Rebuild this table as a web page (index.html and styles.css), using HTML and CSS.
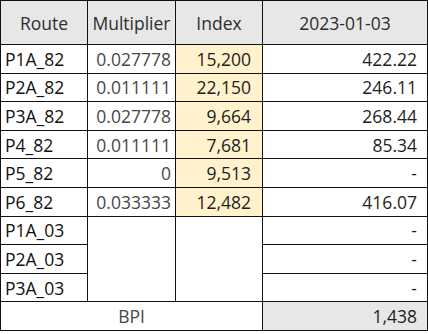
FILE: index.html
```html
<!DOCTYPE html>
<html>
<head>
<meta charset="utf-8">
<link rel="stylesheet" href="styles.css">
</head>
<body>
<table class="grid">
  <colgroup>
    <col class="c-route">
    <col class="c-mult">
    <col class="c-index">
    <col class="c-date">
  </colgroup>
  <thead>
    <tr class="head">
      <th>Route</th>
      <th>Multiplier</th>
      <th>Index</th>
      <th>2023-01-03</th>
    </tr>
  </thead>
  <tbody>
    <tr><td class="route">P1A_82</td><td class="mult">0.027778</td><td class="idx">15,200</td><td class="val">422.22</td></tr>
    <tr><td class="route">P2A_82</td><td class="mult">0.011111</td><td class="idx">22,150</td><td class="val">246.11</td></tr>
    <tr><td class="route">P3A_82</td><td class="mult">0.027778</td><td class="idx">9,664</td><td class="val">268.44</td></tr>
    <tr><td class="route">P4_82</td><td class="mult">0.011111</td><td class="idx">7,681</td><td class="val">85.34</td></tr>
    <tr><td class="route">P5_82</td><td class="mult">0</td><td class="idx">9,513</td><td class="val">-</td></tr>
    <tr><td class="route">P6_82</td><td class="mult">0.033333</td><td class="idx">12,482</td><td class="val">416.07</td></tr>
    <tr><td class="route">P1A_03</td><td class="blank" rowspan="3"></td><td class="blank" rowspan="3"></td><td class="val">-</td></tr>
    <tr><td class="route">P2A_03</td><td class="val">-</td></tr>
    <tr><td class="route">P3A_03</td><td class="val">-</td></tr>
    <tr><td class="bpi-label" colspan="3">BPI</td><td class="bpi-val">1,438</td></tr>
  </tbody>
</table>
</body>
</html>
```

FILE: styles.css
```css
html, body {
  margin: 0;
  padding: 0;
  background: #ffffff;
}

.grid {
  border-collapse: collapse;
  table-layout: fixed;
  width: 427px;
  font-family: "Open Sans", "Noto Sans", sans-serif;
  font-size: 17.5px;
  color: #222222;
}

.c-route { width: 87px; }
.c-mult { width: 88px; }
.c-index { width: 87px; }
.c-date { width: 165px; }

.grid th,
.grid td {
  border: 1px solid #111111;
  padding: 0 4px;
  white-space: nowrap;
  overflow: hidden;
  line-height: 22px;
}

.head th {
  height: 43px;
  background: #e7e7e7;
  font-weight: normal;
  text-align: center;
  color: #2e2e2e;
}

.grid td {
  height: 27.6px;
}

.route {
  text-align: left;
  color: #111111;
}

.mult {
  text-align: right;
  color: #484848;
}

.grid .idx {
  text-align: right;
  padding-right: 11px;
  background: #fff2cc;
  color: #1e1e1e;
}

.grid .val {
  text-align: right;
  padding-right: 10px;
  color: #1e1e1e;
}

.blank {
  background: #ffffff;
}

.bpi-label {
  text-align: center;
  color: #484848;
}

.grid .bpi-val {
  text-align: right;
  padding-right: 10px;
  background: #e7e7e7;
  color: #1e1e1e;
}
```
